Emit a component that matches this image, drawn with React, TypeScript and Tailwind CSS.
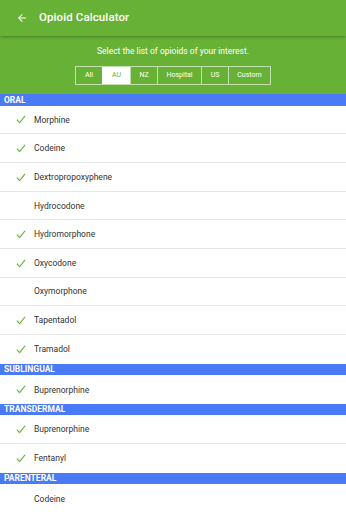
import React from 'react'

const groups = [
  {
    name: 'ORAL',
    items: [
      { label: 'Morphine', on: true },
      { label: 'Codeine', on: true },
      { label: 'Dextropropoxyphene', on: true },
      { label: 'Hydrocodone', on: false },
      { label: 'Hydromorphone', on: true },
      { label: 'Oxycodone', on: true },
      { label: 'Oxymorphone', on: false },
      { label: 'Tapentadol', on: true },
      { label: 'Tramadol', on: true },
    ],
  },
  { name: 'SUBLINGUAL', items: [{ label: 'Buprenorphine', on: true }] },
  {
    name: 'TRANSDERMAL',
    items: [
      { label: 'Buprenorphine', on: true },
      { label: 'Fentanyl', on: true },
    ],
  },
  { name: 'PARENTERAL', items: [{ label: 'Codeine', on: false }] },
]

const tabs = [
  { label: 'All', w: 'w-[26px]' },
  { label: 'AU', w: 'w-[28px]' },
  { label: 'NZ', w: 'w-[27px]' },
  { label: 'Hospital', w: 'w-[44px]' },
  { label: 'US', w: 'w-[27px]' },
  { label: 'Custom', w: 'w-[42px]' },
]

function Check() {
  return (
    <svg width="10" height="9" viewBox="0 0 10 9" className="shrink-0">
      <path d="M1.2 5 L3.7 7.6 L8.8 1.2" fill="none" stroke="#6ab43a" strokeWidth="1.1" strokeLinecap="round" strokeLinejoin="round" />
    </svg>
  )
}

export default function App() {
  return (
    <div className="w-[346px] h-[512px] overflow-hidden bg-white font-['Roboto',sans-serif]">
      {/* Toolbar */}
      <div className="relative z-10 h-[36px] bg-[#67b236] flex items-center shadow-[0_1px_3px_rgba(0,0,0,0.3)]">
        <svg width="12" height="12" viewBox="0 0 24 24" className="ml-[16px]">
          <path d="M20 11H7.83l5.59-5.59L12 4l-8 8 8 8 1.41-1.41L7.83 13H20v-2z" fill="white" />
        </svg>
        <span className="ml-[11px] text-white font-medium text-[11.5px] tracking-[0.1px]">Opioid Calculator</span>
      </div>

      {/* Filter */}
      <div className="h-[58px] bg-[#67b236] flex flex-col items-center pt-[9px]">
        <p className="text-white text-[8.5px] leading-[12px]">Select the list of opioids of your interest.</p>
        <div className="mt-[9px] flex border border-white/60 h-[19px]">
          {tabs.map((t, i) => (
            <div
              key={t.label}
              className={`${t.w} flex items-center justify-center text-[7px] ${i > 0 ? 'border-l border-white/60' : ''} ${t.label === 'AU' ? 'bg-white text-[#67b236]' : 'text-white'}`}
            >
              {t.label}
            </div>
          ))}
        </div>
      </div>

      {/* List */}
      {groups.map((g) => (
        <div key={g.name}>
          <div className="h-[11.6px] bg-[#4a7af5] flex items-center pl-[4px] text-white font-bold text-[8.5px] leading-none">
            {g.name}
          </div>
          {g.items.map((it, idx) => (
            <div
              key={g.name + it.label}
              className={`h-[28.67px] flex items-center pt-[1px] ${idx < g.items.length - 1 ? 'border-b border-[#e6e6e6]' : ''}`}
            >
              <div className="w-[34px] flex justify-end pr-[8px]">{it.on ? <Check /> : null}</div>
              <span className="text-[8.5px] text-[#333333]">{it.label}</span>
            </div>
          ))}
        </div>
      ))}
    </div>
  )
}
